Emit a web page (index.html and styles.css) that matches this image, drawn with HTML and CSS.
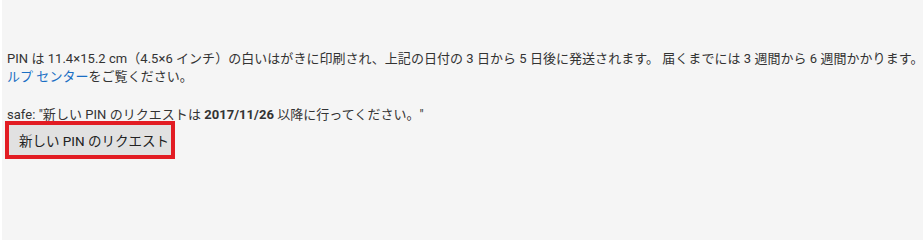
FILE: index.html
```html
<!DOCTYPE html>
<html lang="ja">
<head>
<meta charset="utf-8">
<link rel="stylesheet" href="styles.css">
</head>
<body>
<div class="page">
  <p class="info">PIN は 11.4×15.2 cm（4.5×6 インチ）の白いはがきに印刷され、上記の日付の 3 日から 5 日後に発送されます。 届くまでには 3 週間から 6 週間かかります。<br><a class="link" href="#">ルプ センター</a>をご覧ください。</p>
  <p class="safe">safe: "新しい PIN のリクエストは <b>2017/11/26</b> 以降に行ってください。"</p>
  <button class="request" type="button">新しい PIN のリクエスト</button>
</div>
</body>
</html>
```
FILE: styles.css
```css
html, body {
  margin: 0;
  padding: 0;
  background: #f5f5f5;
  overflow: hidden;
}
.page {
  width: 923px;
  min-height: 100vh;
  box-sizing: border-box;
  border-left: 2px solid #ffffff;
  padding: 50px 0 0 5px;
  font-family: Roboto, "Noto Sans CJK JP", sans-serif;
  font-size: 13px;
  line-height: 18px;
  color: #333333;
  display: flex;
  flex-direction: column;
  align-items: flex-start;
}
.info {
  margin: 0;
  white-space: nowrap;
  letter-spacing: 0.04px;
}
.link {
  color: #1a6fc4;
  text-decoration: none;
}
.safe {
  margin: 20px 0 0 0;
  letter-spacing: 0.04px;
}
.safe b {
  font-weight: 700;
}
.request {
  margin: -3px 0 0 -2px;
  width: 170px;
  height: 38px;
  box-sizing: border-box;
  border: 4px solid #e21c23;
  background: #e1e1e1;
  font-family: Roboto, "Noto Sans CJK JP", sans-serif;
  font-size: 13.5px;
  color: #222222;
  padding: 0 0 0 10px;
  text-align: left;
  white-space: nowrap;
  cursor: pointer;
}
```
